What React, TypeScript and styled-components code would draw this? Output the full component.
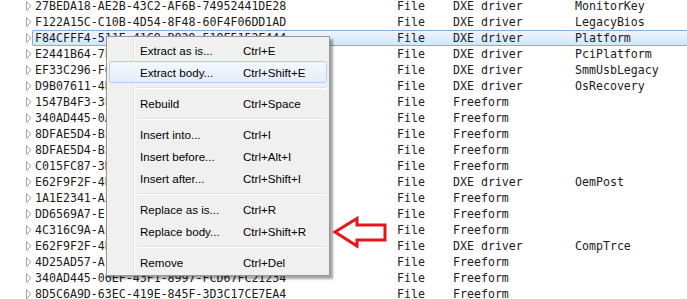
import React from 'react';
import styled, { createGlobalStyle, css } from 'styled-components';

const GlobalStyle = createGlobalStyle`
  html, body {
    margin: 0;
    padding: 0;
    background: #ffffff;
    overflow: hidden;
  }
`;

const Page = styled.div`
  position: relative;
  width: 687px;
  height: 299px;
  overflow: hidden;
  background: #fff;
`;

const Tree = styled.div`
  display: flex;
  flex-direction: column;
  margin-top: -2px;
  font-family: 'DejaVu Sans Mono', 'Liberation Mono', monospace;
  font-size: 11.6px;
  color: #1b1b1b;
`;

const Row = styled.div`
  display: flex;
  align-items: center;
  height: 16px;
`;

const Expander = styled.div`
  width: 32px;
  height: 16px;
  display: flex;
  align-items: center;
  padding-left: 26px;
  box-sizing: border-box;
`;

const Content = styled.div<{ $selected?: boolean }>`
  flex: 1;
  display: flex;
  align-items: center;
  height: 16px;
  box-sizing: border-box;
  padding-left: 2px;
  border: 1px solid transparent;
  border-right: none;
  border-radius: 2px 0 0 2px;
  white-space: pre;
  ${(p) =>
    p.$selected &&
    css`
      border-color: #84acdd;
      background: linear-gradient(#eef4fc, #d5e5f8);
    `}
`;

const Name = styled.span`
  width: 362px;
  flex: none;
`;

const Kind = styled.span`
  width: 56px;
  flex: none;
`;

const Type = styled.span`
  width: 122px;
  flex: none;
`;

const Sub = styled.span`
  flex: none;
`;

const Menu = styled.div`
  position: absolute;
  left: 106px;
  top: 36px;
  width: 224px;
  box-sizing: border-box;
  padding: 2px;
  background: #f0f0f0;
  border: 1px solid #979797;
  box-shadow: 3px 3px 2px rgba(0, 0, 0, 0.35);
  font-family: 'Liberation Sans', Arial, sans-serif;
  font-size: 11.6px;
  color: #000;
  background-image: linear-gradient(
    to right,
    transparent 26px,
    #e2e3e3 26px,
    #e2e3e3 27px,
    #ffffff 27px,
    #ffffff 28px,
    transparent 28px
  );
  background-origin: padding-box;
`;

const Item = styled.div<{ $hover?: boolean }>`
  display: flex;
  align-items: center;
  height: 22px;
  box-sizing: border-box;
  border: 1px solid transparent;
  border-radius: 3px;
  ${(p) =>
    p.$hover &&
    css`
      border-color: #aecff7;
      background: linear-gradient(#f4f8fd, #e3edfa);
    `}
`;

const Label = styled.span`
  width: 103px;
  padding-left: 30px;
  flex: none;
`;

const Shortcut = styled.span`
  flex: none;
`;

const Separator = styled.div`
  height: 9px;
  margin-left: 28px;
  margin-right: 1px;
  display: flex;
  flex-direction: column;
  justify-content: center;
  &::before {
    content: '';
    height: 1px;
    background: #e0e0e0;
  }
  &::after {
    content: '';
    height: 1px;
    background: #ffffff;
  }
`;

const Callout = styled.svg`
  position: absolute;
  left: 330px;
  top: 214px;
`;

const rows: [string, string, string, string][] = [
  ['27BEDA18-AE2B-43C2-AF6B-74952441DE28', 'File', 'DXE driver', 'MonitorKey'],
  ['F122A15C-C10B-4D54-8F48-60F4F06DD1AD', 'File', 'DXE driver', 'LegacyBios'],
  ['F84CFFF4-511E-41C8-B829-519F5152F444', 'File', 'DXE driver', 'Platform'],
  ['E2441B64-7EF4-41FE-B3A3-8CAA7F8D3017', 'File', 'DXE driver', 'PciPlatform'],
  ['EF33C296-F64C-4146-AD04-347899702C84', 'File', 'DXE driver', 'SmmUsbLegacy'],
  ['D9B07611-4B4F-4B2A-9C3B-3B9A0B0F4F0E', 'File', 'DXE driver', 'OsRecovery'],
  ['1547B4F3-3E8A-4FEF-81C8-328ED647AB1A', 'File', 'Freeform', ''],
  ['340AD445-0A5E-4B8B-8F2A-1C9A0F1D1E2B', 'File', 'Freeform', ''],
  ['8DFAE5D4-B50E-4C10-96E6-F2C266CACBB6', 'File', 'Freeform', ''],
  ['8DFAE5D4-B50E-4C10-96E6-F2C266CACBB7', 'File', 'Freeform', ''],
  ['C015FC87-3D8C-4A7E-9F0B-1E2D3C4B5A69', 'File', 'Freeform', ''],
  ['E62F9F2F-4B5C-4E1F-8A2B-3C4D5E6F7A8B', 'File', 'DXE driver', 'OemPost'],
  ['1A1E2341-A2B3-4C5D-9E8F-7A6B5C4D3E2F', 'File', 'Freeform', ''],
  ['DD6569A7-E1F2-4A3B-8C4D-5E6F7A8B9C0D', 'File', 'Freeform', ''],
  ['4C316C9A-AFD9-4E33-AEAB-26C4A4ACC0F7', 'File', 'Freeform', ''],
  ['E62F9F2F-4B5C-4E1F-8A2B-3C4D5E6F7A8C', 'File', 'DXE driver', 'CompTrce'],
  ['4D25AD57-A1B2-4C3D-8E4F-5A6B7C8D9E0F', 'File', 'Freeform', ''],
  ['340AD445-06EF-43F1-8997-FCD67FC21234', 'File', 'Freeform', ''],
  ['8D5C6A9D-63EC-419E-845F-3D3C17CE7EA4', 'File', 'Freeform', ''],
];

type Entry = { label: string; keys: string; hover?: boolean } | 'sep';

const menu: Entry[] = [
  { label: 'Extract as is...', keys: 'Ctrl+E' },
  { label: 'Extract body...', keys: 'Ctrl+Shift+E', hover: true },
  'sep',
  { label: 'Rebuild', keys: 'Ctrl+Space' },
  'sep',
  { label: 'Insert into...', keys: 'Ctrl+I' },
  { label: 'Insert before...', keys: 'Ctrl+Alt+I' },
  { label: 'Insert after...', keys: 'Ctrl+Shift+I' },
  'sep',
  { label: 'Replace as is...', keys: 'Ctrl+R' },
  { label: 'Replace body...', keys: 'Ctrl+Shift+R' },
  'sep',
  { label: 'Remove', keys: 'Ctrl+Del' },
];

const Triangle = () => (
  <svg width="6" height="10" viewBox="0 0 6 10">
    <polygon points="0.5,0.5 5,5 0.5,9.5" fill="#fff" stroke="#a6a6a6" strokeWidth="1" />
  </svg>
);

const App = () => (
  <Page>
    <GlobalStyle />
    <Tree>
      {rows.map(([guid, kind, type, sub], i) => (
        <Row key={i}>
          <Expander>
            <Triangle />
          </Expander>
          <Content $selected={i === 2}>
            <Name>{guid}</Name>
            <Kind>{kind}</Kind>
            <Type>{type}</Type>
            <Sub>{sub}</Sub>
          </Content>
        </Row>
      ))}
    </Tree>
    <Menu>
      {menu.map((m, i) =>
        m === 'sep' ? (
          <Separator key={i} />
        ) : (
          <Item key={i} $hover={m.hover}>
            <Label>{m.label}</Label>
            <Shortcut>{m.keys}</Shortcut>
          </Item>
        ),
      )}
    </Menu>
    <Callout width="60" height="36" viewBox="0 0 60 36">
      <polygon
        points="5,18 27,4.5 27,11 55,11 55,26 27,26 27,32 5,18"
        fill="#fff"
        stroke="#e8141c"
        strokeWidth="3"
        strokeLinejoin="miter"
      />
    </Callout>
  </Page>
);

export default App;
